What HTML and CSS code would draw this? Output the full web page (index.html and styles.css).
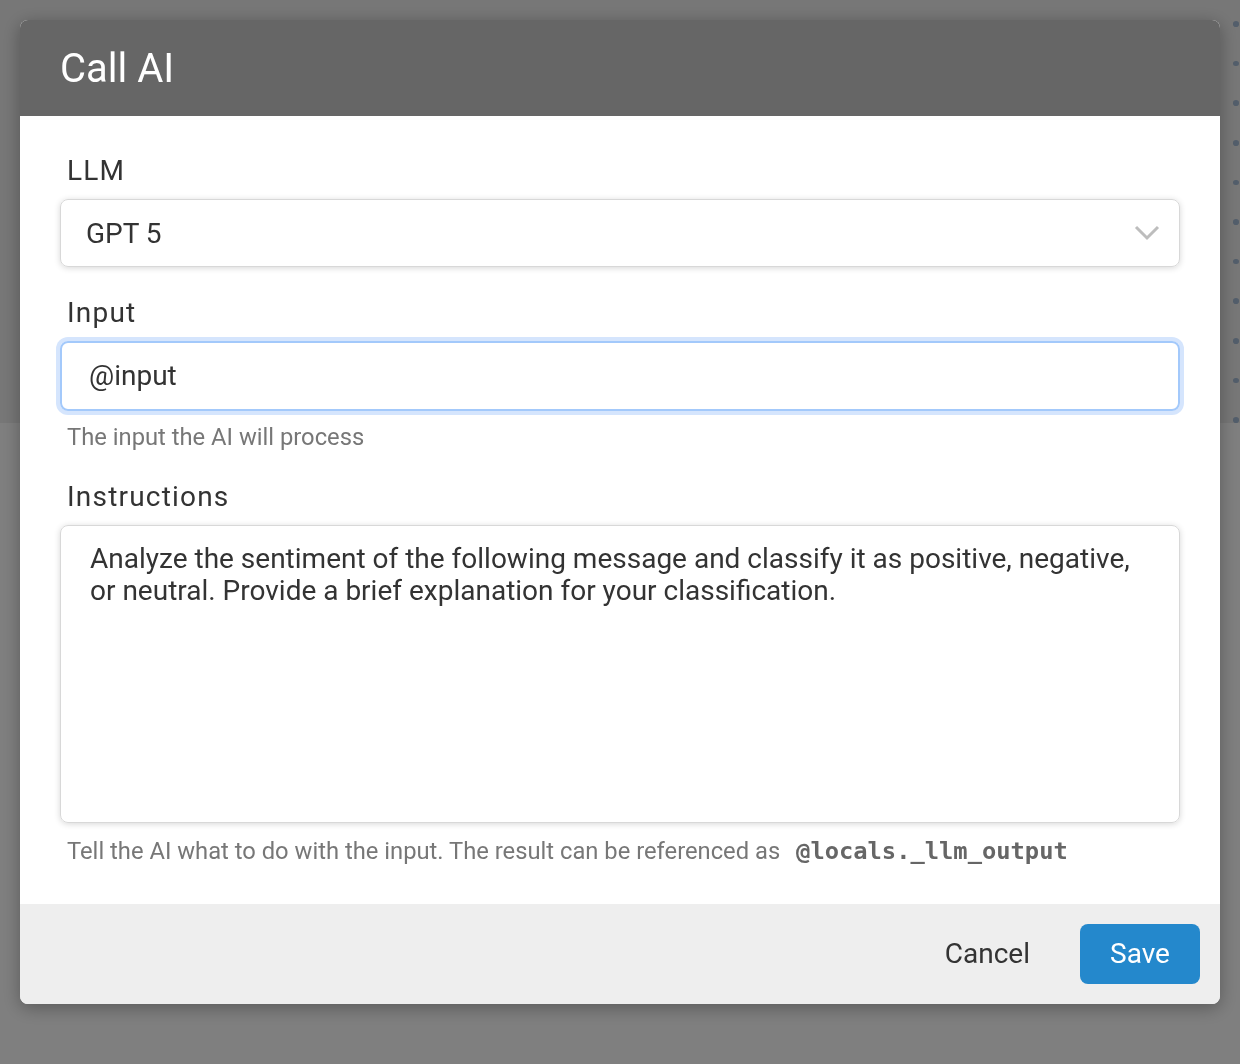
FILE: index.html
```html
<!DOCTYPE html>
<html lang="en">
<head>
<meta charset="utf-8">
<title>Call AI</title>
<link rel="stylesheet" href="styles.css">
</head>
<body>
<div class="page">
  <div class="page-top">
    <div class="dots">
      <span class="dot"></span><span class="dot"></span><span class="dot"></span><span class="dot"></span>
      <span class="dot"></span><span class="dot"></span><span class="dot"></span><span class="dot"></span>
      <span class="dot"></span><span class="dot"></span><span class="dot"></span>
    </div>
  </div>
</div>
<div class="overlay">
  <div class="modal">
    <div class="modal-header">
      <h1 class="modal-title">Call AI</h1>
    </div>
    <div class="modal-body">
      <div class="field">
        <label class="field-label">LLM</label>
        <div class="select">
          <span class="select-value">GPT 5</span>
          <svg class="chevron" width="26" height="16" viewBox="0 0 26 16"><path d="M2 2 L13 13 L24 2" fill="none" stroke="#bdbdbd" stroke-width="3"/></svg>
        </div>
      </div>
      <div class="field">
        <label class="field-label">Input</label>
        <div class="input focused">@input</div>
        <p class="help">The input the AI will process</p>
      </div>
      <div class="field">
        <label class="field-label">Instructions</label>
        <div class="textarea">Analyze the sentiment of the following message and classify it as positive, negative, or neutral. Provide a brief explanation for your classification.</div>
        <p class="help help-last">Tell the AI what to do with the input. The result can be referenced as <code class="code">@locals._llm_output</code></p>
      </div>
    </div>
    <div class="modal-footer">
      <button class="btn btn-cancel">Cancel</button>
      <button class="btn btn-save">Save</button>
    </div>
  </div>
</div>
</body>
</html>
```

FILE: styles.css
```css
* { box-sizing: border-box; }
html, body { margin: 0; padding: 0; }
body {
  width: 1240px;
  height: 1064px;
  background: #ffffff;
  font-family: Roboto, "Liberation Sans", sans-serif;
  overflow: hidden;
}
.page { height: 1064px; }
.page-top {
  height: 423px;
  background: #eeeeee;
  display: flex;
  justify-content: flex-end;
}
.dots {
  display: flex;
  flex-direction: column;
  gap: 34px;
  padding-top: 21px;
  padding-right: 1px;
}
.dot {
  display: block;
  width: 6px;
  height: 6px;
  border-radius: 50%;
  background: #a6bcd6;
}
.overlay {
  position: fixed;
  inset: 0;
  background: rgba(0, 0, 0, 0.5);
  padding: 20px;
}
.modal {
  width: 1200px;
  border-radius: 8px;
  overflow: hidden;
  background: #fff;
  box-shadow: 0 4px 18px rgba(0, 0, 0, 0.3);
  display: flex;
  flex-direction: column;
}
.modal-header {
  background: #666666;
  height: 96px;
  padding: 2px 40px 0;
  display: flex;
  align-items: center;
}
.modal-title {
  margin: 0;
  color: #ffffff;
  font-weight: 400;
  font-size: 40px;
  line-height: 48px;
}
.modal-body {
  padding: 39px 40px 39px;
  display: flex;
  flex-direction: column;
  gap: 30px;
}
.field { display: flex; flex-direction: column; }
.field-label {
  font-size: 28px;
  line-height: 32px;
  letter-spacing: 1.2px;
  color: #333333;
  padding-left: 7px;
  margin-bottom: 12px;
}
.select {
  height: 68px;
  border: 1px solid #d8d8d8;
  border-radius: 8px;
  box-shadow: 0 1px 6px rgba(0, 0, 0, 0.16);
  display: flex;
  align-items: center;
  justify-content: space-between;
  padding: 0 19px 0 25px;
  font-size: 28px;
  color: #333333;
}
.chevron { display: block; }
.input {
  height: 70px;
  border: 2px solid #a3c9fb;
  border-radius: 8px;
  box-shadow: 0 0 0 4px #d5e5fd;
  display: flex;
  align-items: center;
  padding: 0 27px 1px;
  font-size: 28px;
  color: #333333;
}
.help {
  margin: 12px 0 0;
  padding-left: 7px;
  font-size: 23.75px;
  line-height: 28px;
  color: #777777;
}
.help-last { margin-top: 14px; }
.textarea {
  height: 298px;
  border: 1px solid #d8d8d8;
  border-radius: 8px;
  box-shadow: 0 1px 6px rgba(0, 0, 0, 0.16);
  padding: 17px 29px;
  font-size: 28px;
  line-height: 32px;
  color: #333333;
}
.code {
  font-family: "DejaVu Sans Mono", "Liberation Mono", monospace;
  font-weight: 700;
  font-size: 23.75px;
  color: #666666;
  margin-left: 10px;
}
.modal-footer {
  background: #eeeeee;
  height: 100px;
  padding: 0 20px;
  display: flex;
  align-items: center;
  justify-content: flex-end;
  gap: 24px;
}
.btn {
  font-family: Roboto, "Liberation Sans", sans-serif;
  font-size: 28px;
  height: 60px;
  border: none;
  border-radius: 8px;
  cursor: pointer;
  padding-bottom: 3px;
}
.btn-cancel {
  background: transparent;
  color: #333333;
  padding-left: 26px;
  padding-right: 26px;
}
.btn-save {
  background: #2488cc;
  color: #ffffff;
  width: 120px;
  padding-left: 0;
  padding-right: 0;
}
```
